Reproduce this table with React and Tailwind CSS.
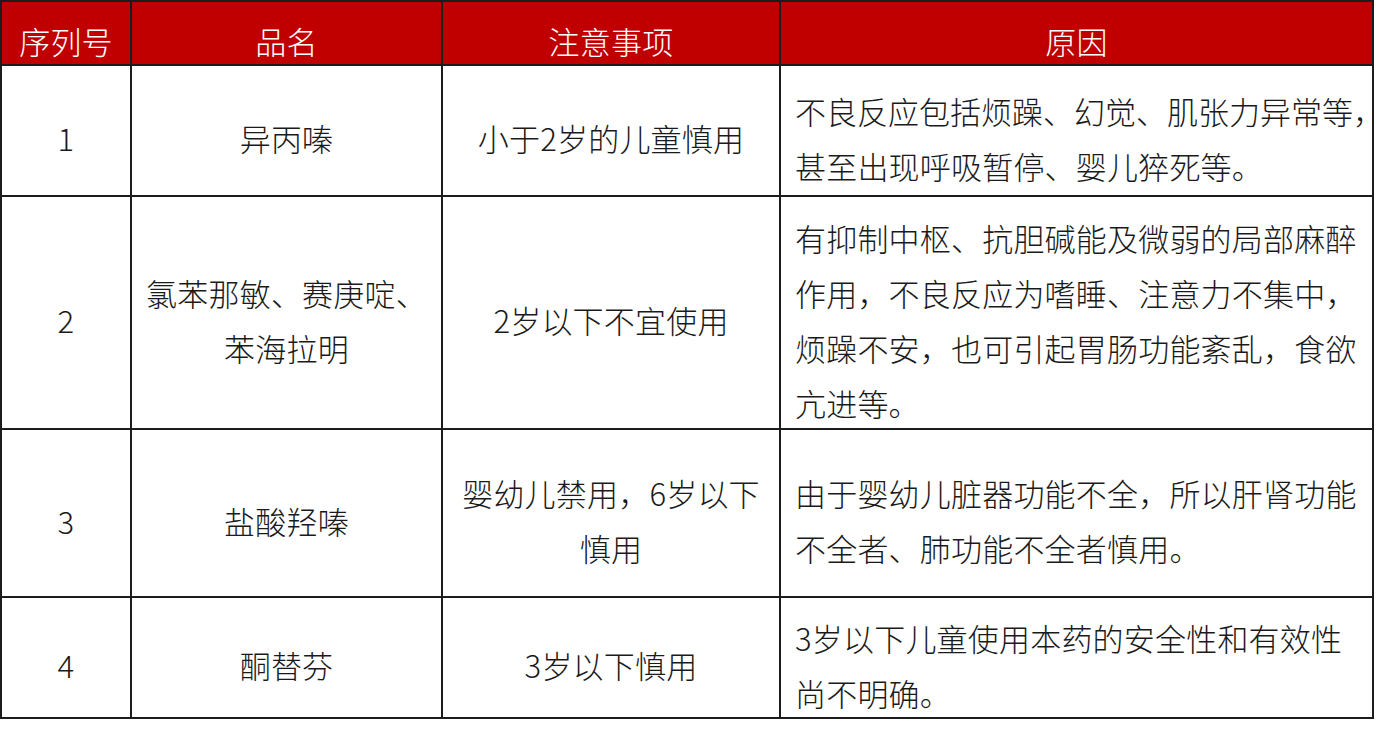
import React from "react";

const font = { fontFamily: '"Noto Sans CJK SC", "Noto Sans", sans-serif' };

const rows = [
  {
    h: "h-[129px]",
    n: "1",
    name: ["异丙嗪"],
    note: ["小于2岁的儿童慎用"],
    reason: [
      <span className="tracking-normal">
        不良反应包括烦躁、幻觉、肌张力异常等<span className="inline-block w-[12px]">，</span>
      </span>,
      "甚至出现呼吸暂停、婴儿猝死等。",
    ],
  },
  {
    h: "h-[231px]",
    n: "2",
    name: ["氯苯那敏、赛庚啶、", "苯海拉明"],
    note: ["2岁以下不宜使用"],
    reason: [
      "有抑制中枢、抗胆碱能及微弱的局部麻醉",
      "作用，不良反应为嗜睡、注意力不集中，",
      "烦躁不安，也可引起胃肠功能紊乱，食欲",
      "亢进等。",
    ],
  },
  {
    h: "h-[166px]",
    n: "3",
    name: ["盐酸羟嗪"],
    note: ["婴幼儿禁用，6岁以下", "慎用"],
    reason: ["由于婴幼儿脏器功能不全，所以肝肾功能", "不全者、肺功能不全者慎用。"],
  },
  {
    h: "h-[119px]",
    n: "4",
    name: ["酮替芬"],
    note: ["3岁以下慎用"],
    reason: ["3岁以下儿童使用本药的安全性和有效性", "尚不明确。"],
  },
];

function Lines({ lines }) {
  return lines.map((l, i) => (
    <div key={i} className="whitespace-nowrap">
      {l}
    </div>
  ));
}

export default function App() {
  return (
    <div className="w-[1376px] h-[731px] bg-white overflow-hidden" style={font}>
      <div className="w-[1374px] bg-[#1c1c1c] p-[2px] grid grid-cols-[128px_309px_336px_591px] gap-[2px] text-[31px] tracking-[0.2px] leading-[55px] font-light text-[#1a1a1a]">
        <div className="h-[62px] bg-[#c00000] text-white flex items-center justify-center pt-[15px]">序列号</div>
        <div className="h-[62px] bg-[#c00000] text-white flex items-center justify-center pt-[15px]">品名</div>
        <div className="h-[62px] bg-[#c00000] text-white flex items-center justify-center pt-[15px]">注意事项</div>
        <div className="h-[62px] bg-[#c00000] text-white flex items-center justify-center pt-[15px]">原因</div>
        {rows.map((r) => (
          <React.Fragment key={r.n}>
            <div className={`${r.h} bg-white flex items-center justify-center pt-[14px]`}>{r.n}</div>
            <div className={`${r.h} bg-white flex flex-col items-center justify-center text-center pt-[14px]`}>
              <Lines lines={r.name} />
            </div>
            <div className={`${r.h} bg-white flex flex-col items-center justify-center text-center pt-[14px]`}>
              <Lines lines={r.note} />
            </div>
            <div className={`${r.h} bg-white flex flex-col justify-center pl-[14px] pt-[14px]`}>
              <Lines lines={r.reason} />
            </div>
          </React.Fragment>
        ))}
      </div>
    </div>
  );
}
